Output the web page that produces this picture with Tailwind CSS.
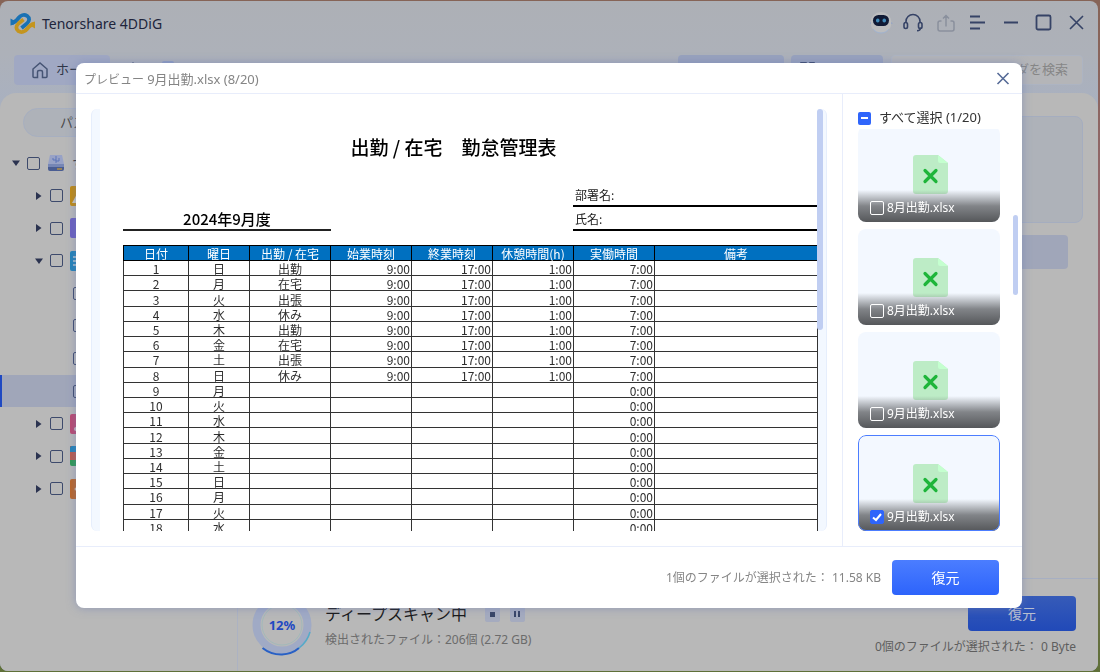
<!DOCTYPE html>
<html lang="ja">
<head>
<meta charset="utf-8">
<title>Tenorshare 4DDiG</title>
<script src="https://cdn.jsdelivr.net/npm/@tailwindcss/browser@4"></script>
</head>
<body class="h-screen overflow-hidden bg-linear-to-b from-[#866457] via-[#9a6a78] to-[#5f7038] font-['Noto_Sans','Noto_Sans_CJK_JP',sans-serif] text-xs text-[#333]">

<!-- Main window, dimmed behind the dialog -->
<div class="h-full pt-px pr-[2px] pb-px">
  <div class="flex h-full flex-col overflow-hidden rounded-lg bg-linear-to-b from-[#adb0b6] via-[#adb1b9] via-8% to-[#a6b0c4] to-20%">
    <header class="flex h-[46px] shrink-0 items-center pr-[11px] pl-[10px]">
      <svg class="h-6 w-[26px]" viewBox="0 0 26 24" fill="none" stroke-width="3.800" aria-hidden="true">
        <path id="strand" d="M2 10.500c3 .200 4.500-1.800 6.500-4.500s5.500-4 8.500-2.200c3 2.200 2.600 5.200 0 7.700L11.500 16" stroke="#1a72b4"/>
        <path d="M.500 6.500l3.500 2v4l-3.500 1z" fill="#1a72b4"/>
        <path d="M23.500 12.500c-3-.200-4.500 1.800-6.500 4.500s-5.500 4-8.500 2.200c-3-2.200-2.600-5.200 0-7.700L13.500 7.500" stroke="#c4951f"/>
        <path d="M25 16.500l-3.500-2v-4l3.500-1z" fill="#c4951f"/>
      </svg>
      <h1 class="ml-[6px] flex-1 text-sm text-[#20253c]">Tenorshare 4DDiG</h1>
      <div class="flex items-center gap-[11px] pb-[2px] text-[#364366]">
        <button aria-label="アシスタント" class="size-6">
          <svg viewBox="0 0 24 24" class="size-6"><circle cx="11" cy="11.500" r="10.500" fill="#bcbdbf"/><path d="M3 18a10 10 0 0 0 16 0" fill="none" stroke="#9fb2d0"/><path d="M0 13q0-2 1-1M22 13q0-2-1-1" fill="none" stroke="#8fa2c6"/><rect x="3" y="4" width="16" height="11" rx="5.500" fill="#101a35"/><rect x="6" y="7.500" width="3.500" height="4" rx="1.700" fill="#418ab9"/><rect x="12.500" y="7.500" width="3.500" height="4" rx="1.700" fill="#418ab9"/></svg>
        </button>
        <button aria-label="サポート" class="-ml-[2px] size-5">
          <svg viewBox="0 0 20 20" class="size-5" fill="none" stroke="currentColor" stroke-width="1.600"><path d="M3 10V8.500a7 7 0 0 1 14 0V10M17.500 14.500c0 2.500-1.500 3.300-3.500 3.300"/><rect x="1" y="9.500" width="3.500" height="6" rx="1.700"/><rect x="15.500" y="9.500" width="3.500" height="6" rx="1.700"/></svg>
        </button>
        <button aria-label="共有" class="ml-[2px] size-5 text-[#8a909d]">
          <svg viewBox="0 0 20 20" class="size-5" fill="none" stroke="currentColor" stroke-width="1.500"><path d="M5.500 8H4a2 2 0 0 0-2 2v6a2 2 0 0 0 2 2h12a2 2 0 0 0 2-2v-6a2 2 0 0 0-2-2h-1.500M10 13.500V2.500M7 5.500l3-3 3 3"/></svg>
        </button>
        <button aria-label="メニュー" class="size-5">
          <svg viewBox="0 0 20 20" class="size-5" fill="none" stroke="currentColor" stroke-width="1.800"><path d="M3 3.500h10M3 9.500h15M3 15.500h10"/></svg>
        </button>
        <button aria-label="最小化" class="ml-[3px] size-5">
          <svg viewBox="0 0 20 20" class="size-5" stroke="currentColor" stroke-width="1.800"><path d="M3 9.500h14"/></svg>
        </button>
        <button aria-label="最大化" class="ml-[2px] size-5">
          <svg viewBox="0 0 20 20" class="size-5" fill="none" stroke="currentColor" stroke-width="1.800"><rect x="2.500" y="2.500" width="14" height="14" rx="1.500"/></svg>
        </button>
        <button aria-label="閉じる" class="ml-[2px] size-5">
          <svg viewBox="0 0 20 20" class="size-5" stroke="currentColor" stroke-width="1.600"><path d="M3 3l13 13M16 3L3 16"/></svg>
        </button>
      </div>
    </header>

    <nav class="flex h-[46px] shrink-0 items-start pt-2 pr-[15px] pl-[14px]">
      <button class="flex h-[30px] w-24 items-center gap-[7px] rounded-sm bg-[#a0a8c3] pl-[17px] text-[13px] text-[#2f3648]">
        <svg viewBox="0 0 18 18" class="size-[18px]" fill="none" stroke="#465474" stroke-width="1.500"><path d="M2 8l7-6 7 6v7.500a1 1 0 0 1-1 1h-3.500V11q0-1.500-1.500-1.500H8Q6.500 9.500 6.500 11v5.500H3a1 1 0 0 1-1-1z"/></svg>
        ホーム
      </button>
      <button aria-label="上へ" class="ml-4 mt-[6px]"><svg viewBox="0 0 16 16" class="size-4" fill="none" stroke="#465474" stroke-width="1.500"><path d="M7 15V2M2 7l5-5 5 5"/></svg></button>
      <span class="ml-5 mt-[6px] h-4 w-3 rounded-xs bg-[#8f9dc2]"></span>
      <span class="flex-1"></span>
      <button aria-label="フィルター" class="h-[30px] w-[106px] rounded-sm bg-[#98a2bd]"></button>
      <button aria-label="表示" class="ml-[7px] h-[30px] w-[92px] rounded-sm bg-[#98a2bd] pl-[9px]">
        <svg viewBox="0 0 16 16" class="size-4" fill="#364366"><rect width="7" height="6" rx="1"/><rect x="9" width="6" height="6" rx="1"/></svg>
      </button>
      <label class="ml-[8px] flex h-[30px] w-[192px] items-center rounded-sm border border-[#adb4c2] bg-[#b4b5b8] pr-[14px] pl-[13px]">
        <svg viewBox="0 0 16 16" class="size-4" fill="none" stroke="#364366" stroke-width="1.600"><circle cx="6" cy="6" r="5"/><path d="M10 10l4 4"/></svg>
        <input aria-label="検索" placeholder="フォルダを検索" class="w-full min-w-0 text-right text-[13px] outline-none placeholder:text-[#868686]">
      </label>
    </nav>

    <div class="flex min-h-0 flex-1 rounded-t-2xl bg-[#b8b8b8]">
      <aside class="w-[238px] border-r border-[#acb2c2]">
        <div class="pt-[15px] pl-[23px]">
          <button class="h-[29px] w-[190px] rounded-full border border-[#a7afc0] bg-[#aeb2b9] pl-9 text-left text-[13px] text-[#484848]">パス</button>
        </div>
        <ul id="tree" class="mt-[10px] grid h-[358px] auto-rows-fr"></ul>
      </aside>
      <main class="flex min-w-0 flex-1 flex-col">
        <div class="flex flex-1 flex-col items-end pt-[23px] pr-[15px]">
          <div class="h-[107px] w-[220px] rounded-lg border border-[#a5adbf] bg-[#aeb2b9]"></div>
          <div class="mt-[12px] mr-[15px] h-[34px] w-[190px] rounded-sm bg-[#a0a6b9]"></div>
        </div>
        <footer class="flex h-[93px] items-start border-t border-[#a7afc2] pr-[22px] pl-[13px]">
          <svg viewBox="0 0 64 64" class="mt-[14px] size-16" aria-label="12%">
            <circle cx="31" cy="32" r="25.500" fill="none" stroke="#a0aac5" stroke-width="8"/>
            <circle cx="31" cy="32" r="20" fill="none" stroke="#a2b9ba"/>
            <path d="M11.500 55A30 30 0 0 0 31 61.500Q41 61 48 55" fill="none" stroke="#2860c5" stroke-width="2"/>
            <path d="M48 55a30 30 0 0 0 11-16" fill="none" stroke="#55abc7" stroke-width="1.500"/>
            <text x="31" y="37" text-anchor="middle" font-size="13" font-weight="700" fill="#1f49c2">12%</text>
          </svg>
          <div class="mt-[23px] ml-[10px] flex-1">
            <div class="flex h-6 items-center gap-[10px] text-base text-[#181818]">
              <span class="mr-2">ディープスキャン中</span>
              <button aria-label="停止" class="grid size-[15px] place-items-center rounded-xs bg-[#a5abbf]"><span class="size-[5px] bg-[#364366]"></span></button>
              <button aria-label="一時停止" class="flex size-[15px] items-center justify-center gap-[2px] rounded-xs bg-[#a5abbf]"><span class="h-[6px] w-[2px] bg-[#364366]"></span><span class="h-[6px] w-[2px] bg-[#364366]"></span></button>
            </div>
            <p class="mt-[6px] leading-4 text-[#6b6b6b]">検出されたファイル：206個 (2.72 GB)</p>
          </div>
          <div class="flex flex-col items-end">
            <button class="mt-[17px] h-[35px] w-[108px] rounded-sm bg-linear-to-b from-[#365bb8] to-[#2149b8] text-sm text-[#b8bfd0]">復元</button>
            <p class="mt-2 leading-4 text-[#5e5e5e]">0個のファイルが選択された： 0 Byte</p>
          </div>
        </footer>
      </main>
    </div>
  </div>
</div>

<!-- Preview dialog -->
<div class="fixed inset-0 pt-[63px] pr-[78px] pb-16 pl-[76px]">
  <section role="dialog" aria-labelledby="preview-title" class="flex h-full flex-col rounded-lg bg-white shadow-[0_0_10px_rgba(110,125,180,0.55)]">
    <header class="flex h-[31px] shrink-0 items-center justify-between border-b border-[#e8edfb] pr-[12px] pl-2">
      <h2 id="preview-title" class="pt-[3px] text-[#858585]">プレビュー <span class="text-[13px]">9月出勤.xlsx (8/20)</span></h2>
      <button aria-label="閉じる" class="size-[14px]"><svg viewBox="0 0 14 14" class="size-[14px]" stroke="#566b97" stroke-width="1.600"><path d="M1.500 2l11 11M12.500 2l-11 11"/></svg></button>
    </header>

    <div class="flex min-h-0 flex-1">
      <div class="min-w-0 flex-1 py-[15px] pr-[15px] pl-[15px]">
        <div class="relative h-full overflow-hidden rounded-md border-x border-[#e6eefc] bg-[#f3f8ff] pr-[8px] pl-[8px]">
          <div class="bg-white pl-[23px] font-['Noto_Sans_CJK_JP',sans-serif] text-black">
            <h3 class="pt-6 pr-[34px] text-center text-[19px] leading-7 font-medium">出勤 / 在宅　勤怠管理表</h3>
            <div class="mt-[22px] flex items-end justify-between">
              <p class="w-[208px] border-b-2 border-[#222] text-center text-[15px] leading-5 font-medium">2024年9月度</p>
              <dl class="w-[245px] leading-[22px] text-[#222]">
                <div class="h-6 border-b-2 border-black pt-px pl-[2px]"><dt>部署名:</dt></div>
                <div class="h-6 border-b-2 border-black pt-px pl-[2px]"><dt>氏名:</dt></div>
              </dl>
            </div>
            <table class="mt-[14px] h-[290px] w-full table-fixed border-collapse text-center leading-[13px]">
              <colgroup><col class="w-[65px]"><col class="w-[61px]"><col class="w-[81px]"><col class="w-[81px]"><col class="w-[81px]"><col class="w-[81px]"><col class="w-[81px]"><col></colgroup>
              <thead class="bg-[#0070c0] text-white"><tr id="head"></tr></thead>
              <tbody id="rows" class="text-[#2e2e2e]"></tbody>
            </table>
          </div>
          <div class="absolute top-0 right-[3px] h-[221px] w-[6px] rounded-full bg-[#c0cef2]"></div>
        </div>
      </div>

      <aside class="relative flex w-[180px] flex-col border-l border-[#e8edfb] pb-[15px] pl-[15px]">
        <label class="mt-[15px] flex h-[18px] items-center gap-2 text-[13px] text-[#333]">
          <span class="relative grid size-[13px] place-items-center">
            <input type="checkbox" class="size-[13px] appearance-none rounded-xs bg-[#2f65fb]">
            <span class="absolute h-[2px] w-[7px] bg-white"></span>
          </span>
          すべて選択 (1/20)
        </label>
        <ul id="files" class="mt-[2px] flex min-h-0 flex-1 flex-col justify-end gap-[7px] overflow-hidden"></ul>
        <div class="absolute top-[121px] right-[4px] h-20 w-[5px] rounded-full bg-[#c0cef2]"></div>
      </aside>
    </div>

    <footer class="flex h-[62px] shrink-0 items-center justify-end gap-[11px] border-t border-[#e8edfb] pr-[23px]">
      <p class="text-[#858585]">1個のファイルが選択された： 11.58 KB</p>
      <button class="h-[35px] w-[107px] rounded-sm bg-linear-to-b from-[#4b7dff] to-[#2d63fb] text-sm text-white">復元</button>
    </footer>
  </section>
</div>

<script>
const headers = ['日付','曜日','出勤 / 在宅','始業時刻','終業時刻','休憩時間(h)','実働時間','備考'];
document.getElementById('head').innerHTML = headers.map(h => `<th class="border border-black p-0 pt-px font-normal">${h}</th>`).join('');

const days = '日月火水木金土';
const status = ['出勤','在宅','出張','休み'];
document.getElementById('rows').innerHTML = Array.from({length: 18}, (_, i) => {
  const worked = i < 8;
  const times = worked ? ['9:00','17:00','1:00','7:00'] : ['','','','0:00'];
  return `<tr>
    <td class="border border-[#333] p-0 pt-px">${i + 1}</td>
    <td class="border border-[#333] p-0 pt-px">${days[i % 7]}</td>
    <td class="border border-[#333] p-0 pt-px">${worked ? status[i % 4] : ''}</td>
    ${times.map(t => `<td class="border border-[#333] p-0 pt-px pr-px text-right">${t}</td>`).join('')}
    <td class="border border-[#333] p-0"></td></tr>`;
}).join('');

const files = [['8月出勤.xlsx'],['8月出勤.xlsx'],['9月出勤.xlsx'],['9月出勤.xlsx', true]];
document.getElementById('files').innerHTML = files.map(([name, on]) => `
  <li class="relative flex h-24 w-[142px] shrink-0 flex-col items-center overflow-hidden rounded-lg bg-[#f3f8ff] pt-[29px] pl-[2px]">
    <svg viewBox="0 0 35 39" class="h-[39px] w-[35px]"><path d="M3 0h22l10 8v28a3 3 0 0 1-3 3H3a3 3 0 0 1-3-3V3a3 3 0 0 1 3-3z" fill="#bdecc6"/><path d="M25 0l10 8h-8a2 2 0 0 1-2-2z" fill="#c4ffcf"/><path d="M12 15.500l11 11M23 15.500l-11 11" stroke="#1eb53a" stroke-width="3.200" stroke-linecap="round"/></svg>
    <label class="absolute inset-x-0 bottom-0 flex h-8 items-center gap-[3px] bg-linear-to-b from-[#5c5e61]/0 via-[#5c5e61]/75 via-50% to-[#55575a] pt-[3px] pl-3 text-white">
      <span class="relative grid size-[14px] place-items-center">
        <input type="checkbox" ${on ? 'checked' : ''} class="size-[14px] appearance-none rounded-xs border border-white checked:border-[#2f65fb] checked:bg-[#2f65fb]">
        ${on ? '<svg viewBox="0 0 14 14" class="pointer-events-none absolute size-[14px]" fill="none" stroke="#fff" stroke-width="2"><path d="M3 7.500l3 2.500 5-6"/></svg>' : ''}
      </span>${name}</label>
    ${on ? '<span class="pointer-events-none absolute inset-0 rounded-lg border border-[#4c7dff]"></span>' : ''}
  </li>`).join('');

const expand = {
  down: '<svg viewBox="0 0 8 8" class="size-2" fill="#2b3350"><path d="M0 1.500h8L4 7z"/></svg>',
  right: '<svg viewBox="0 0 8 8" class="size-2" fill="#2b3350"><path d="M1 0v8l5.500-4z"/></svg>'
};
const box = '<input type="checkbox" aria-label="選択" class="size-[13px] appearance-none rounded-xs border border-[#3d4a6c]">';
const swatch = s => `<svg viewBox="0 0 20 20" class="size-5">${s}</svg>`;
const tiles = {
  image: swatch('<rect width="20" height="20" rx="2" fill="#c08a10"/><path d="M2 17l5-9 5 9z" fill="#c9c7bd"/>'),
  video: swatch('<rect width="20" height="20" rx="2" fill="#6a5fc0"/>'),
  doc: swatch('<rect width="20" height="20" rx="2" fill="#2182b8"/><path d="M3 6h13M3 10h13M3 14h13" stroke="#b8c6d0" stroke-width="1.600"/>'),
  audio: swatch('<rect width="20" height="20" rx="2" fill="#ba4870"/><circle cx="6" cy="15" r="2" fill="#c8b5bd"/>'),
  archive: swatch('<rect width="20" height="20" rx="2" fill="#2c9952"/><path d="M0 0h20v14H0z" fill="#b95a4c"/><path d="M2 0h16a2 2 0 0 1 2 2v4H0V2a2 2 0 0 1 2-2z" fill="#2182b8"/>'),
  other: swatch('<rect width="20" height="20" rx="2" fill="#bb6526"/><circle cx="6" cy="10" r="1.500" fill="#d0b8a5"/>')
};
const drive = '<svg viewBox="0 0 18 18" class="size-[18px]"><path d="M3 1h12l2 9H1z" fill="#98a2c6"/><path d="M1 10h16v5a2 2 0 0 1-2 2H3a2 2 0 0 1-2-2z" fill="#4a5d92"/><path d="M1 10h16v3H1z" fill="#7686b5"/><path d="M9 2v7M6 4v2h3M12 4v3H9" stroke="#5c75b8" fill="none"/><path d="M10 15h5" stroke="#b58f45" stroke-width="1.500"/></svg>';
const node = (dir, tile) => `<li class="flex items-center gap-[7px] pl-[35px]">${expand[dir]}${box}${tiles[tile]}</li>`;
const leaf = on => `<li class="${on ? 'flex items-center border-l-2 border-[#1f49c2] bg-[#a0a6b9] pl-[71px]' : 'flex items-center pl-[73px]'}">${box}</li>`;
document.getElementById('tree').innerHTML =
  `<li class="flex items-center gap-[7px] pl-3 text-[13px] text-[#333]">${expand.down}${box}${drive}<span>すべて</span></li>` +
  node('right','image') + node('right','video') + node('down','doc') +
  leaf() + leaf() + leaf() + leaf(true) +
  node('right','audio') + node('right','archive') + node('right','other');
</script>
</body>
</html>
